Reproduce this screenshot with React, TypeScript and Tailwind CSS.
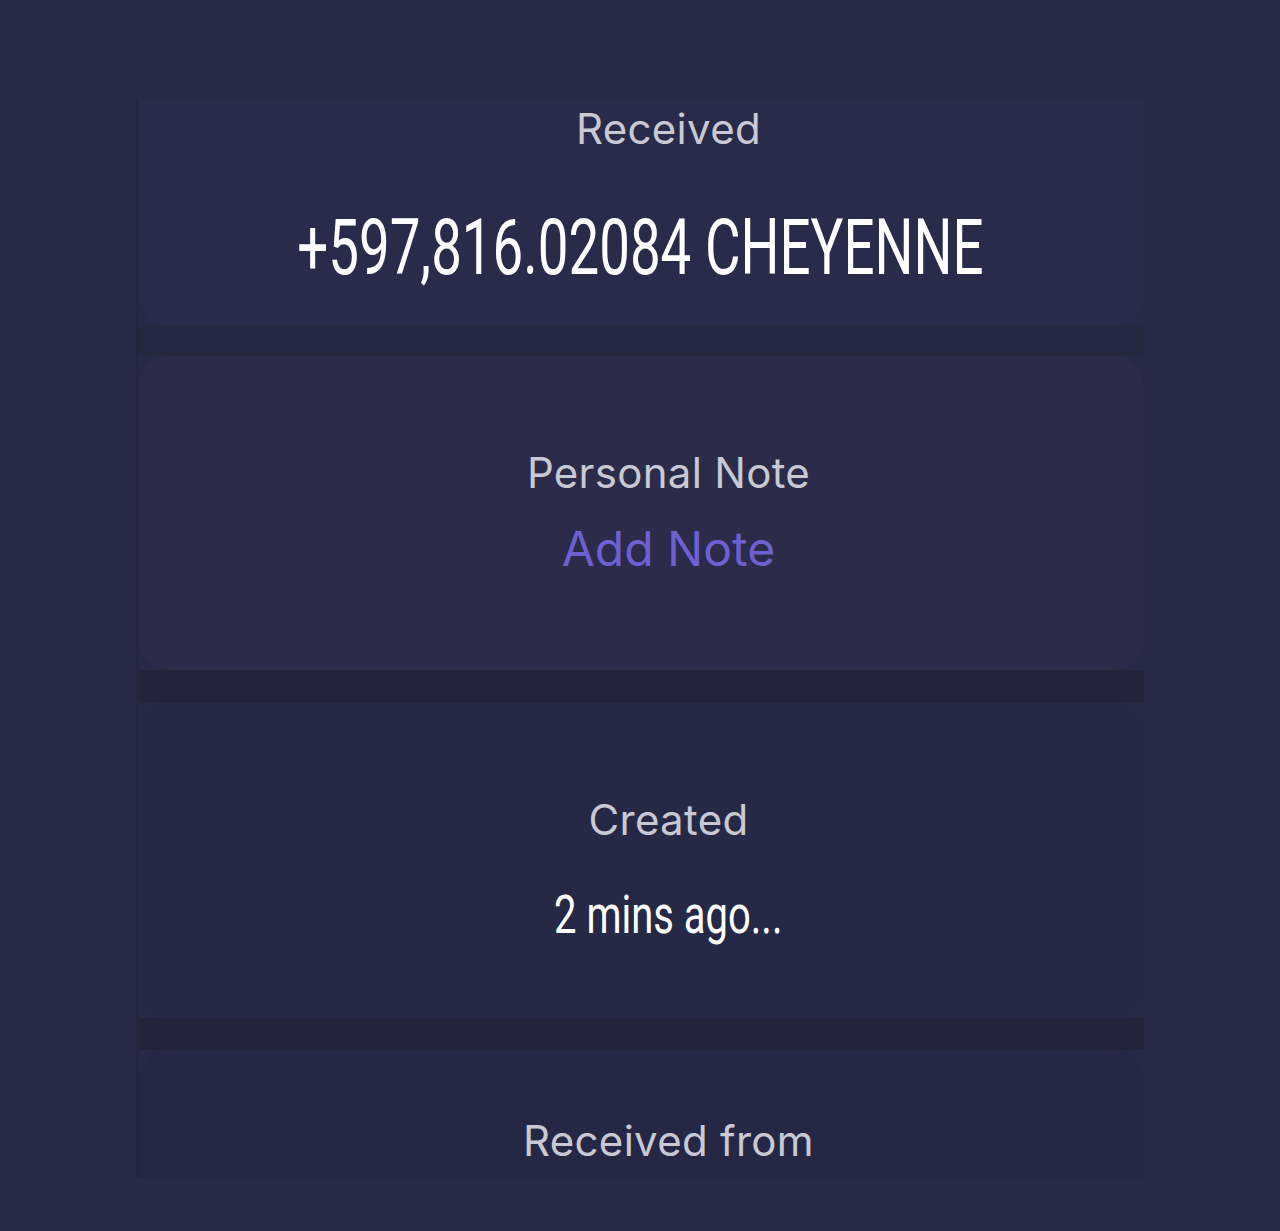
import React from "react";

const label = "text-[#c9c9d3] text-[42px] leading-none tracking-[0.3px]";

export default function App() {
  return (
    <div
      className="w-[1280px] h-[1231px] bg-[#262a47] overflow-hidden pt-[100px]"
      style={{ fontFamily: "Inter, 'Noto Sans', sans-serif" }}
    >
      <div className="relative ml-[136px] w-[1024px] h-[1078px] bg-[#272a47] border-l-[3px] border-[#23263e] flex flex-col pr-[16px]">
        {/* Card 1 */}
        <div className="h-[226px] rounded-b-[30px] bg-[#282b49] flex flex-col items-center pl-[54px]">
          <div className={`${label} mt-[8px]`}>Received</div>
        </div>
        <div className="h-[30px] bg-[#252841]" />
        {/* Card 2 */}
        <div className="h-[314px] rounded-[30px] bg-[#2b2c49] flex flex-col items-center pl-[54px]">
          <div className={`${label} mt-[96px]`}>Personal Note</div>
          <div className="mt-[31px] text-[#6c60d2] text-[48px] leading-none">Add Note</div>
        </div>
        <div className="h-[33px] bg-[#21243b]" />
        {/* Card 3 */}
        <div className="h-[315px] rounded-[30px] bg-[#262946] flex flex-col items-center pl-[54px]">
          <div className={`${label} mt-[96px]`}>Created</div>
          <div
            className="mt-[47px] text-white text-[54px] leading-none scale-x-[0.74]"
            style={{ fontFamily: "Roboto, sans-serif" }}
          >
            2 mins ago...
          </div>
        </div>
        <div className="h-[32px] bg-[#21243b]" />
        {/* Card 4 */}
        <div className="flex-1 rounded-t-[30px] bg-[#252845] flex flex-col items-center pl-[54px]">
          <div className={`${label} mt-[70px]`}>Received from</div>
        </div>
        {/* Overlay amount */}
        <div className="absolute left-[-139px] w-[1280px] top-[110px] flex justify-center">
          <div
            className="text-white text-[77px] leading-none whitespace-nowrap scale-x-[0.71]"
            style={{ fontFamily: "Roboto, sans-serif" }}
          >
            +597,816.02084 CHEYENNE
          </div>
        </div>
      </div>
    </div>
  );
}
